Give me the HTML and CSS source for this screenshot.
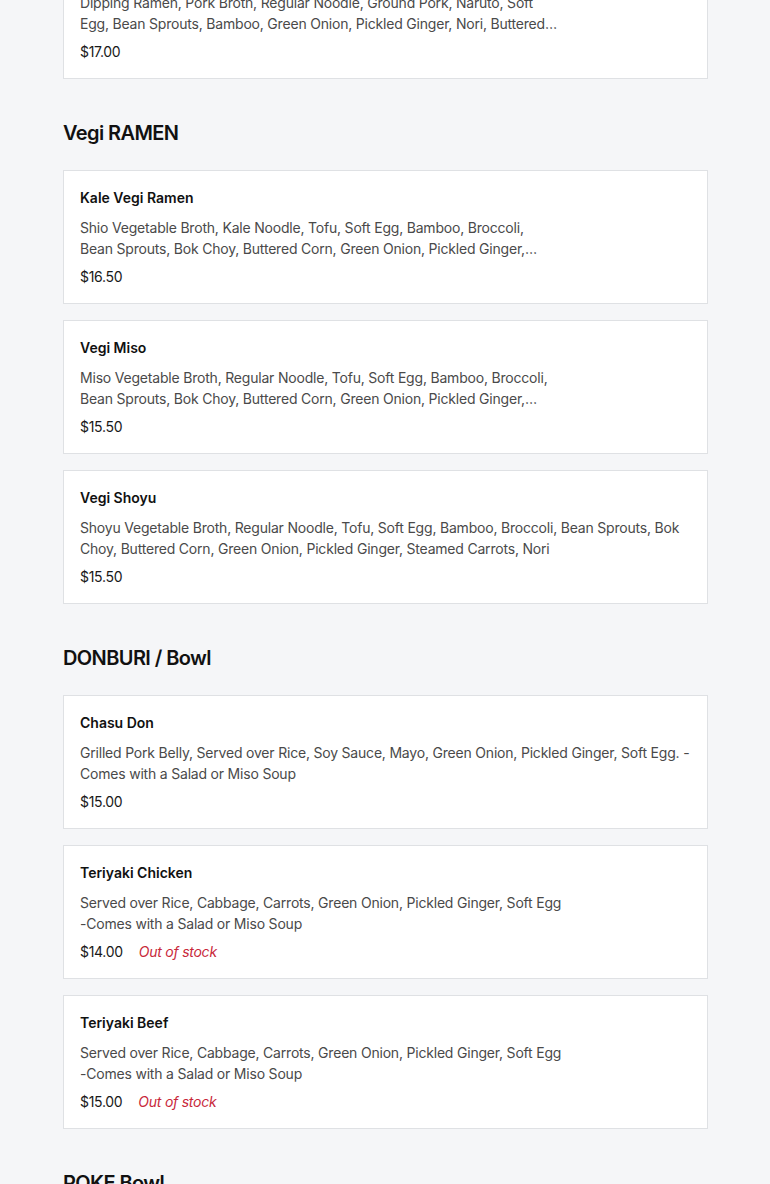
FILE: index.html
```html
<!DOCTYPE html>
<html>
<head>
<meta charset="utf-8">
<link rel="stylesheet" href="styles.css">
</head>
<body>
<main class="menu">
  <section class="section first">
    <div class="list">
      <div class="card top-cut">
        <div class="item-title">Tsukemen</div>
        <p class="desc narrow">Dipping Ramen, Pork Broth, Regular Noodle, Ground Pork, Naruto, Soft Egg, Bean Sprouts, Bamboo, Green Onion, Pickled Ginger, Nori, Buttered Corn</p>
        <div class="price-row"><span class="price">$17.00</span></div>
      </div>
    </div>
  </section>

  <section class="section">
    <h2 class="section-title">Vegi RAMEN</h2>
    <div class="list">
      <div class="card">
        <div class="item-title">Kale Vegi Ramen</div>
        <p class="desc narrow">Shio Vegetable Broth, Kale Noodle, Tofu, Soft Egg, Bamboo, Broccoli, Bean Sprouts, Bok Choy, Buttered Corn, Green Onion, Pickled Ginger, Steamed Carrots, Nori</p>
        <div class="price-row"><span class="price">$16.50</span></div>
      </div>
      <div class="card">
        <div class="item-title">Vegi Miso</div>
        <p class="desc narrow">Miso Vegetable Broth, Regular Noodle, Tofu, Soft Egg, Bamboo, Broccoli, Bean Sprouts, Bok Choy, Buttered Corn, Green Onion, Pickled Ginger, Steamed Carrots, Nori</p>
        <div class="price-row"><span class="price">$15.50</span></div>
      </div>
      <div class="card">
        <div class="item-title">Vegi Shoyu</div>
        <p class="desc">Shoyu Vegetable Broth, Regular Noodle, Tofu, Soft Egg, Bamboo, Broccoli, Bean Sprouts, Bok Choy, Buttered Corn, Green Onion, Pickled Ginger, Steamed Carrots, Nori</p>
        <div class="price-row"><span class="price">$15.50</span></div>
      </div>
    </div>
  </section>

  <section class="section">
    <h2 class="section-title">DONBURI / Bowl</h2>
    <div class="list">
      <div class="card">
        <div class="item-title">Chasu Don</div>
        <p class="desc">Grilled Pork Belly, Served over Rice, Soy Sauce, Mayo, Green Onion, Pickled Ginger, Soft Egg. - Comes with a Salad or Miso Soup</p>
        <div class="price-row"><span class="price">$15.00</span></div>
      </div>
      <div class="card">
        <div class="item-title">Teriyaki Chicken</div>
        <p class="desc">Served over Rice, Cabbage, Carrots, Green Onion, Pickled Ginger, Soft Egg<br>-Comes with a Salad or Miso Soup</p>
        <div class="price-row"><span class="price">$14.00</span><span class="stock">Out of stock</span></div>
      </div>
      <div class="card">
        <div class="item-title">Teriyaki Beef</div>
        <p class="desc">Served over Rice, Cabbage, Carrots, Green Onion, Pickled Ginger, Soft Egg<br>-Comes with a Salad or Miso Soup</p>
        <div class="price-row"><span class="price">$15.00</span><span class="stock">Out of stock</span></div>
      </div>
    </div>
  </section>

  <section class="section">
    <h2 class="section-title">POKE Bowl</h2>
  </section>
</main>
</body>
</html>
```

FILE: styles.css
```css
html, body {
  margin: 0;
  padding: 0;
  background: #f5f6f8;
}
body {
  font-family: Inter, "Noto Sans", "Liberation Sans", sans-serif;
  color: #191919;
  -webkit-font-smoothing: antialiased;
}
.menu {
  width: 645px;
  margin: 0 auto;
  padding-left: 1px;
  margin-top: -55px;
}
.section {
  margin-bottom: 40px;
}
.section-title {
  margin: 0 0 23px;
  font-size: 20px;
  line-height: 28px;
  font-weight: 600;
  letter-spacing: -0.6px;
  color: #111;
}
.list {
  display: flex;
  flex-direction: column;
  gap: 16px;
}
.card {
  background: #fff;
  border: 1px solid #dfe1e4;
  padding: 16px;
}
.item-title {
  font-size: 14px;
  line-height: 22px;
  font-weight: 600;
  color: #111;
}
.desc {
  margin: 8px 0;
  font-size: 14px;
  line-height: 21px;
  letter-spacing: -0.2px;
  color: #4a4a4a;
  display: -webkit-box;
  -webkit-line-clamp: 2;
  -webkit-box-orient: vertical;
  overflow: hidden;
}
.desc.narrow {
  max-width: 480px;
}
.price-row {
  display: flex;
  gap: 16px;
  font-size: 14px;
  line-height: 20px;
}
.price {
  color: #191919;
  letter-spacing: -0.3px;
}
.stock {
  color: #c8283a;
  font-style: italic;
  letter-spacing: -0.25px;
}
```
